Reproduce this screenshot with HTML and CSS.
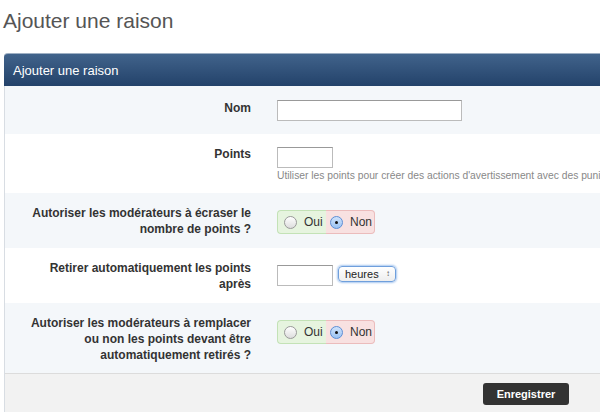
FILE: index.html
```html
<!DOCTYPE html>
<html lang="fr">
<head>
    <meta charset="UTF-8">
    <title>Ajouter une raison</title>
    <link rel="stylesheet" href="styles.css">
</head>
<body>
    <h1 class="page-title">Ajouter une raison</h1>

    <div class="panel">
        <div class="panel-head">Ajouter une raison</div>

        <div class="row alt first">
            <div class="label">Nom</div>
            <div class="field"><input type="text" class="text-input wide"></div>
        </div>

        <div class="row">
            <div class="label">Points</div>
            <div class="field">
                <input type="text" class="text-input short">
                <div class="hint">Utiliser les points pour créer des actions d'avertissement avec des punitions</div>
            </div>
        </div>

        <div class="row alt">
            <div class="label">Autoriser les modérateurs à écraser le nombre de points ?</div>
            <div class="field">
                <div class="yesno">
                    <span class="opt yes"><span class="radio"></span>Oui</span>
                    <span class="opt no"><span class="radio on"></span>Non</span>
                </div>
            </div>
        </div>

        <div class="row">
            <div class="label">Retirer automatiquement les points après</div>
            <div class="field inline">
                <input type="text" class="text-input short">
                <div class="select">heures<span class="arrows">&#x2195;</span></div>
            </div>
        </div>

        <div class="row alt tall">
            <div class="label">Autoriser les modérateurs à remplacer ou non les points devant être automatiquement retirés ?</div>
            <div class="field">
                <div class="yesno">
                    <span class="opt yes"><span class="radio"></span>Oui</span>
                    <span class="opt no"><span class="radio on"></span>Non</span>
                </div>
            </div>
        </div>

        <div class="panel-foot">
            <button class="save-btn">Enregistrer</button>
        </div>
    </div>
</body>
</html>
```

FILE: styles.css
```css
body {
    margin: 0;
    padding: 0 0 0 4px;
    font-family: "Liberation Sans", Arial, sans-serif;
    background: #fff;
    overflow: hidden;
    width: 600px;
    height: 412px;
}

.page-title {
    margin: 0 0 0 -1px;
    padding: 6px 0 0 0;
    font-size: 21px;
    font-weight: normal;
    color: #555;
    line-height: 30px;
    height: 47px;
}

.panel {
    width: 660px;
    border-left: 1px solid #d8dde3;
    border-top-left-radius: 4px;
    background: #f4f7fa;
}

.panel-head {
    height: 32px;
    line-height: 33px;
    padding-left: 9px;
    margin-left: -1px;
    color: #fff;
    font-size: 13px;
    background: linear-gradient(#41638b, #23426a);
    border-top: 1px solid #9fb0c4;
    border-top-left-radius: 4px;
}

.row {
    display: flex;
    background: #fff;
    padding: 12px 0 11px;
}

.row.alt {
    background: #f4f7fa;
}

.row.first {
    padding: 13px 0 13px;
}

.row.tall {
    padding-bottom: 10px;
}

.label {
    width: 272px;
    box-sizing: border-box;
    padding: 0 26px 0 16px;
    text-align: right;
    font-size: 12px;
    font-weight: bold;
    line-height: 16px;
    color: #333;
}

.row.first .label {
    padding-top: 1px;
}

.field {
    padding-top: 1px;
}

.field.inline {
    display: flex;
    align-items: flex-start;
    gap: 5px;
    padding-top: 5px;
}

.text-input {
    height: 21px;
    box-sizing: border-box;
    border: 1px solid #bbb;
    border-top-color: #999;
    background: #fff;
    margin: 0;
    padding: 0 3px;
    font-size: 11px;
}

.wide {
    width: 185px;
}

.short {
    width: 56px;
}

.hint {
    font-size: 10.3px;
    line-height: 12px;
    color: #888;
    margin-top: 2px;
    white-space: nowrap;
}

.yesno {
    display: inline-flex;
    margin-top: 4px;
    height: 24px;
    font-size: 12px;
    color: #333;
}

.opt {
    display: flex;
    align-items: center;
    box-sizing: border-box;
    height: 24px;
    padding: 0 6px;
}

.opt.yes {
    width: 49px;
    background: #e6f4df;
    border: 1px solid #c3e2b6;
    border-right: none;
    border-radius: 4px 0 0 4px;
}

.opt.no {
    width: 49px;
    background: #f8e1e1;
    border: 1px solid #ebbcbc;
    border-left: none;
    border-radius: 0 4px 4px 0;
    padding-left: 4px;
}

.radio {
    width: 11px;
    height: 11px;
    border-radius: 50%;
    border: 1px solid #999;
    background: linear-gradient(#fff, #ddd);
    margin-right: 7px;
    position: relative;
    flex-shrink: 0;
}

.radio.on {
    border-color: #5b8ed6;
    background: linear-gradient(#cfe2fb, #9cc3f3);
}

.radio.on::after {
    content: "";
    position: absolute;
    left: 4px;
    top: 4px;
    width: 3px;
    height: 3px;
    border-radius: 50%;
    background: #111;
}

.select {
    margin-top: 1px;
    width: 58px;
    height: 16px;
    box-sizing: border-box;
    border: 1px solid #6f9fdc;
    border-radius: 4px;
    box-shadow: 0 0 2px 1px #a9c8f0;
    background: linear-gradient(#fff, #eee);
    font-size: 11px;
    line-height: 14px;
    padding-left: 6px;
    color: #222;
    display: flex;
    justify-content: space-between;
}

.arrows {
    font-size: 8px;
    padding-right: 5px;
    color: #555;
}

.panel-foot {
    border-top: 1px solid #dcdcdc;
    background: #f2f2f2;
    height: 40px;
    padding: 9px 0 0 478px;
    box-sizing: border-box;
}

.save-btn {
    width: 86px;
    height: 22px;
    border: none;
    border-radius: 3px;
    background: #333;
    color: #fff;
    font-family: "Liberation Sans", Arial, sans-serif;
    font-size: 11px;
    font-weight: bold;
    padding: 0;
}
```
